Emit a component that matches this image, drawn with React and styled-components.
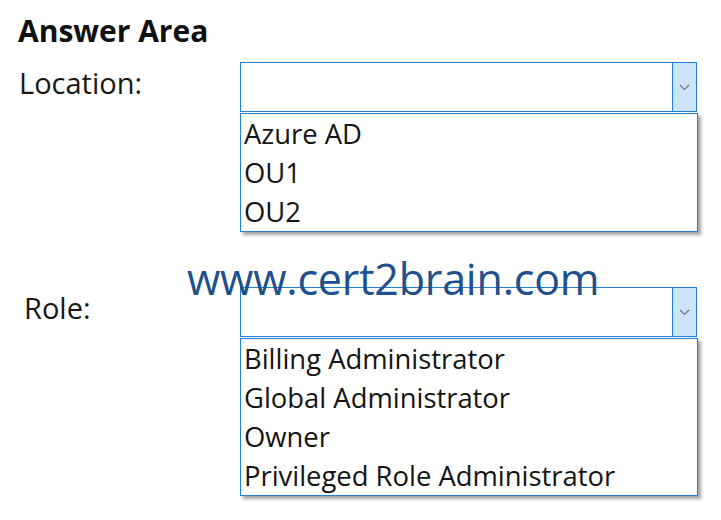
import styled, { createGlobalStyle } from 'styled-components'

const GlobalStyle = createGlobalStyle`
  html, body {
    margin: 0;
    padding: 0;
    background: #ffffff;
  }
  body {
    font-family: 'Open Sans', 'Noto Sans', sans-serif;
    color: #141414;
  }
`

const Page = styled.div`
  position: relative;
  box-sizing: border-box;
  width: 721px;
  height: 520px;
  padding: 9px 23px 0 0;
  overflow: hidden;
`

const Title = styled.h1`
  margin: 0 0 0 18px;
  font-size: 30px;
  font-weight: 700;
  line-height: 44px;
  color: #111111;
`

const Row = styled.div`
  display: grid;
  grid-template-columns: 240px 1fr;
  margin-top: ${({ $top }) => $top}px;
`

const Label = styled.div`
  padding-left: ${({ $indent }) => $indent}px;
  height: 50px;
  display: flex;
  align-items: center;
  font-size: 29px;
  padding-bottom: ${({ $lift }) => $lift}px;
  box-sizing: border-box;
  color: #171717;
`

const Field = styled.div`
  display: flex;
  flex-direction: column;
  width: 458px;
`

const SelectBox = styled.div`
  box-sizing: border-box;
  height: 50px;
  width: 457px;
  border: 1px solid #1e7fd9;
  display: flex;
  justify-content: flex-end;
  background: #ffffff;
`

const Arrow = styled.div`
  width: 24px;
  box-sizing: border-box;
  border-left: 1px solid #1e7fd9;
  background: #cde4f7;
  display: flex;
  align-items: center;
  justify-content: center;
  color: #6b7380;
`

const List = styled.ul`
  list-style: none;
  margin: 1px 0 0;
  padding: 0;
  box-sizing: border-box;
  width: 458px;
  border: 1px solid #1e7fd9;
  background: #ffffff;
  box-shadow: 3px 3px 3px rgba(90, 90, 90, 0.55);
`

const Item = styled.li`
  height: 39px;
  line-height: 39px;
  padding-left: 3px;
  font-size: 27.4px;
  color: #141414;
  white-space: nowrap;
`

const Watermark = styled.div`
  position: absolute;
  left: 187px;
  top: 251px;
  font-size: 43px;
  line-height: 56px;
  color: #20508b;
  letter-spacing: -0.2px;
  pointer-events: none;
`

function Chevron() {
  return (
    <svg width='11' height='7' viewBox='0 0 11 7'>
      <polyline points='1,1 5.5,5.5 10,1' fill='none' stroke='currentColor' strokeWidth='1.2' />
    </svg>
  )
}

function Dropdown({ options }) {
  return (
    <Field>
      <SelectBox>
        <Arrow>
          <Chevron />
        </Arrow>
      </SelectBox>
      <List>
        {options.map((option) => (
          <Item key={option}>{option}</Item>
        ))}
      </List>
    </Field>
  )
}

export default function App() {
  return (
    <>
      <GlobalStyle />
      <Page>
        <Title>Answer Area</Title>
        <Row $top={9}>
          <Label $indent={19} $lift={10}>Location:</Label>
          <Dropdown options={['Azure AD', 'OU1', 'OU2']} />
        </Row>
        <Row $top={55}>
          <Label $indent={24} $lift={10}>Role:</Label>
          <Dropdown
            options={[
              'Billing Administrator',
              'Global Administrator',
              'Owner',
              'Privileged Role Administrator'
            ]}
          />
        </Row>
        <Watermark>www.cert2brain.com</Watermark>
      </Page>
    </>
  )
}
